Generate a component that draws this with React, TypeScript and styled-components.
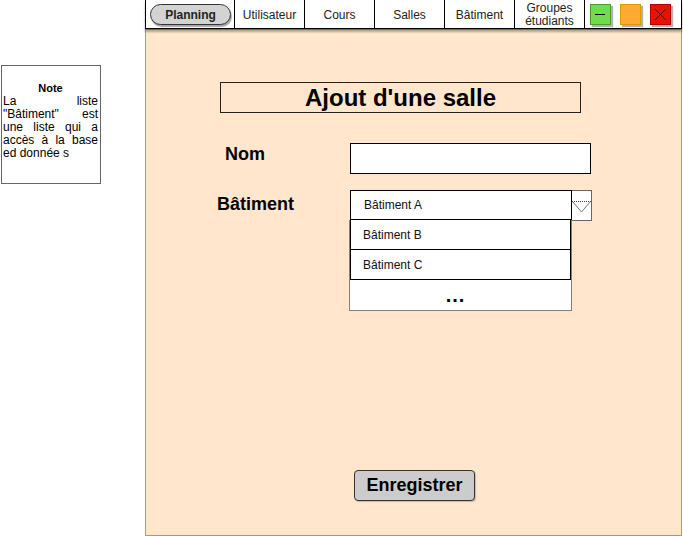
import React from "react";
import styled, { createGlobalStyle } from "styled-components";

const Global = createGlobalStyle`
  html, body { margin: 0; padding: 0; background: #fff; }
  body { font-family: "Liberation Sans", Arial, sans-serif; color: #000; }
`;

const Page = styled.div`
  display: flex;
  align-items: flex-start;
  width: 683px;
  height: 536px;
  overflow: hidden;
`;

const Note = styled.aside`
  box-sizing: border-box;
  width: 100px;
  height: 119px;
  margin: 65px 0 0 1px;
  padding: 16px 2px 0 1px;
  border: 1px solid #666;
  background: #fff;
  font-size: 12px;
  line-height: 13px;
`;

const NoteTitle = styled.div`
  font-weight: bold;
  font-size: 11px;
  text-align: center;
`;

const NoteBody = styled.p`
  margin: 0;
  text-align: justify;
`;

const Window = styled.div`
  display: flex;
  flex-direction: column;
  width: 537px;
  margin-left: 44px;
`;

const TopBar = styled.nav`
  position: relative;
  z-index: 1;
  display: flex;
  box-sizing: border-box;
  height: 29px;
  background: #fff;
  border: 1px solid #000;
  border-top: none;
  box-shadow: 0 3px 2px rgba(0, 0, 0, 0.3);
`;

const PlanningCell = styled.div`
  box-sizing: border-box;
  width: 88px;
  display: flex;
  align-items: center;
  padding: 1px 0 0 4px;
`;

const Pill = styled.div`
  box-sizing: border-box;
  width: 81px;
  height: 21px;
  border: 1px solid #333;
  border-radius: 11px;
  background: #d3d3d3;
  box-shadow: 1px 2px 1px rgba(0, 0, 0, 0.35);
  display: flex;
  align-items: center;
  justify-content: center;
  font-weight: bold;
  font-size: 12px;
  color: #222;
`;

const Tab = styled.div`
  box-sizing: border-box;
  width: 70px;
  border-left: 1px solid #000;
  display: flex;
  align-items: center;
  justify-content: center;
  padding-top: 2px;
  text-align: center;
  font-size: 12px;
  line-height: 13px;
  color: #222;
`;

const WinControls = styled.div`
  flex: 1;
  border-left: 1px solid #000;
  display: flex;
  align-items: center;
  gap: 9px;
  padding: 1px 0 0 5px;
`;

const WinButton = styled.div<{ $bg: string; $border: string }>`
  box-sizing: border-box;
  width: 21px;
  height: 21px;
  background: ${(p) => p.$bg};
  border: 1px solid ${(p) => p.$border};
  box-shadow: 2px 2px 1px rgba(0, 0, 0, 0.3);
  display: flex;
  align-items: center;
  justify-content: center;
`;

const Panel = styled.main`
  box-sizing: border-box;
  height: 507px;
  background: #ffe6cc;
  border: 1px solid #d79b00;
  display: flex;
  flex-direction: column;
`;

const Title = styled.h1`
  box-sizing: border-box;
  margin: 52px 0 0 74px;
  width: 361px;
  height: 31px;
  border: 1px solid #222;
  font-size: 24px;
  font-weight: bold;
  line-height: 29px;
  text-align: center;
`;

const Form = styled.div`
  margin-top: 30px;
  display: grid;
  grid-template-columns: 204px 242px;
  row-gap: 16px;
`;

const Label = styled.label<{ $indent: number; $top: number }>`
  padding-left: ${(p) => p.$indent}px;
  padding-top: ${(p) => p.$top}px;
  font-size: 18px;
  font-weight: bold;
`;

const TextInput = styled.input`
  box-sizing: border-box;
  width: 241px;
  height: 31px;
  margin: 0;
  padding: 0 6px;
  border: 1px solid #000;
  background: #fff;
  outline: none;
  font: 12px "Liberation Sans", Arial, sans-serif;
`;

const Select = styled.div`
  position: relative;
  display: flex;
  height: 31px;
`;

const SelectValue = styled.div`
  box-sizing: border-box;
  width: 222px;
  height: 30px;
  border: 1px solid #000;
  padding-left: 13px;
  background: #fff;
  display: flex;
  align-items: center;
  font-size: 12px;
  color: #111;
`;

const ArrowBox = styled.div`
  box-sizing: border-box;
  width: 20px;
  height: 31px;
  border: 1px solid #666;
  border-left: none;
  background: #fff;
`;

const DropList = styled.div`
  position: absolute;
  top: 30px;
  left: -1px;
  box-sizing: border-box;
  width: 223px;
  border: 1px solid #8c7d6e;
  border-top: none;
  background: #fff;
`;

const DropItem = styled.div`
  box-sizing: border-box;
  height: 30px;
  border: 1px solid #000;
  border-top: none;
  padding-left: 12px;
  display: flex;
  align-items: center;
  font-size: 12px;
  color: #111;
`;

const DropMore = styled.div`
  height: 30px;
  display: flex;
  align-items: center;
  justify-content: center;
  padding-right: 10px;
  font-size: 20px;
  font-weight: bold;
  letter-spacing: 1px;
`;

const SaveButton = styled.button`
  box-sizing: border-box;
  align-self: center;
  margin: auto 0 34px 2px;
  width: 121px;
  height: 31px;
  padding: 0;
  background: #cccccc;
  border: 1px solid #333;
  border-radius: 4px;
  box-shadow: 1px 1px 1px rgba(0, 0, 0, 0.2);
  font: bold 18px "Liberation Sans", Arial, sans-serif;
  color: #000;
`;

export default function App() {
  return (
    <>
      <Global />
      <Page>
        <Note>
          <NoteTitle>Note</NoteTitle>
          <NoteBody>
            La liste "Bâtiment" est une liste qui a accès à la base ed donnée s
          </NoteBody>
        </Note>
        <Window>
          <TopBar>
            <PlanningCell>
              <Pill>Planning</Pill>
            </PlanningCell>
            <Tab>Utilisateur</Tab>
            <Tab>Cours</Tab>
            <Tab>Salles</Tab>
            <Tab>Bâtiment</Tab>
            <Tab>
              Groupes
              <br />
              étudiants
            </Tab>
            <WinControls>
              <WinButton $bg="#6fdc4b" $border="#4e9a2e">
                <svg width="19" height="19" viewBox="0 0 19 19">
                  <line x1="4" y1="9.5" x2="14" y2="9.5" stroke="#000" strokeWidth="1" />
                </svg>
              </WinButton>
              <WinButton $bg="#ffaa33" $border="#d79b00" />
              <WinButton $bg="#e51400" $border="#b20000">
                <svg width="19" height="19" viewBox="0 0 19 19">
                  <line x1="4" y1="4" x2="15" y2="15" stroke="#6f0000" strokeWidth="1" />
                  <line x1="15" y1="4" x2="4" y2="15" stroke="#6f0000" strokeWidth="1" />
                </svg>
              </WinButton>
            </WinControls>
          </TopBar>
          <Panel>
            <Title>Ajout d'une salle</Title>
            <Form>
              <Label $indent={79} $top={1}>Nom</Label>
              <TextInput type="text" />
              <Label $indent={71} $top={4}>Bâtiment</Label>
              <Select>
                <SelectValue>Bâtiment A</SelectValue>
                <ArrowBox>
                  <svg width="19" height="29" viewBox="0 0 19 29">
                    <line x1="0" y1="10.5" x2="19" y2="10.5" stroke="#444" strokeWidth="1" strokeDasharray="1 1" />
                    <polyline points="1,11 9.5,21 18,11" fill="none" stroke="#777" strokeWidth="1" />
                  </svg>
                </ArrowBox>
                <DropList>
                  <DropItem>Bâtiment B</DropItem>
                  <DropItem>Bâtiment C</DropItem>
                  <DropMore>...</DropMore>
                </DropList>
              </Select>
            </Form>
            <SaveButton>Enregistrer</SaveButton>
          </Panel>
        </Window>
      </Page>
    </>
  );
}
